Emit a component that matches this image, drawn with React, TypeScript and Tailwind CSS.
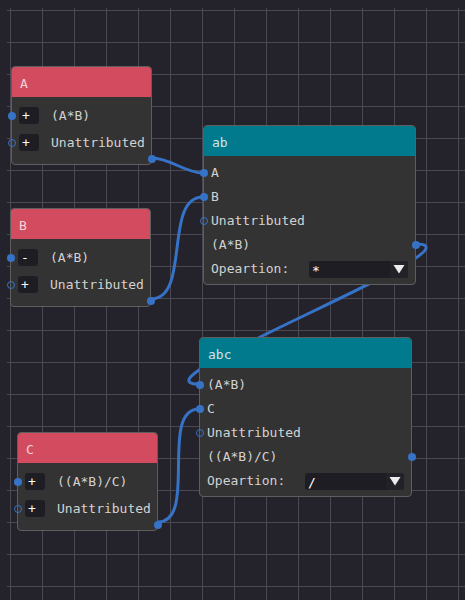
import React from 'react'

const PIN = '#3672c6'

type Pin = 'filled' | 'hollow' | 'none'

function PinDot({ kind, side }: { kind: Pin; side: 'left' | 'right' }) {
  if (kind === 'none') return null
  const pos = side === 'left' ? 'left-[-4.5px]' : 'right-[-4.5px]'
  const look =
    kind === 'filled'
      ? 'bg-[#3672c6]'
      : 'border border-[#3672c6] bg-transparent'
  return (
    <span
      className={`absolute ${pos} top-1/2 -translate-y-1/2 w-[8px] h-[8px] rounded-full ${look}`}
    />
  )
}

interface InputRow {
  sign: '+' | '-'
  label: string
  pin: Pin
}

function SmallNode({
  title,
  rows,
  className,
}: {
  title: string
  rows: InputRow[]
  className: string
}) {
  return (
    <div
      className={`absolute w-[141px] h-[99px] rounded-[4px] border border-[#5e5e5e] bg-[#333333] ${className}`}
    >
      <div className="h-[30px] rounded-t-[3px] bg-[#d24b5e] flex items-center pt-[3px] pl-[8px] text-[#f3d3d8]">
        {title}
      </div>
      <div className="pt-[5px] pl-[7px]">
        {rows.map((r) => (
          <div key={r.label} className="relative h-[27px] flex items-center">
            <div className="absolute left-[-7px] top-0 h-full w-0">
              <PinDot kind={r.pin} side="left" />
            </div>
            <span className="w-[20px] h-[17px] rounded-[3px] bg-[#1e1d23] text-white leading-[17px] pl-[3px]">
              {r.sign}
            </span>
            <span className="ml-[12px] text-[#d2d2d2]">{r.label}</span>
          </div>
        ))}
      </div>
      {/* output pin */}
      <span className="absolute right-[-4.5px] top-[88px] w-[8px] h-[8px] rounded-full bg-[#3672c6]" />
    </div>
  )
}

function BigNode({
  title,
  rows,
  result,
  op,
  className,
}: {
  title: string
  rows: { label: string; pin: Pin }[]
  result: string
  op: string
  className: string
}) {
  return (
    <div
      className={`absolute w-[213px] rounded-[4px] border border-[#5e5e5e] bg-[#333333] ${className}`}
    >
      <div className="h-[30px] rounded-t-[3px] bg-[#007a8c] flex items-center pt-[3px] pl-[8px] text-[#cfe3e7]">
        {title}
      </div>
      <div className="pt-[5px] pb-[3px] pl-[7px] text-[#d2d2d2]">
        {rows.map((r) => (
          <div key={r.label} className="relative h-[24px] flex items-center">
            <div className="absolute left-[-7px] top-0 h-full w-0">
              <PinDot kind={r.pin} side="left" />
            </div>
            {r.label}
          </div>
        ))}
        <div className="relative h-[24px] flex items-center">
          {result}
          <div className="absolute right-0 top-0 h-full w-0">
            <PinDot kind="filled" side="right" />
          </div>
        </div>
        <div className="h-[24px] flex items-center">
          <span className="w-[98px]">Opeartion:</span>
          <div className="w-[99px] h-[17px] rounded-[3px] bg-[#1e1d23] flex items-center">
            <span className="flex-1 pl-[3px] pt-[2px] text-white leading-[17px]">{op}</span>
            <span className="w-[18px] h-full rounded-r-[3px] bg-[#222128] flex items-center justify-center">
              <svg width="12" height="10" viewBox="0 0 12 10">
                <path d="M0.5 1 L11.5 1 L6 9.5 Z" fill="#ececec" />
              </svg>
            </span>
          </div>
        </div>
      </div>
    </div>
  )
}

function Grid() {
  const xs = Array.from({ length: 15 }, (_, i) => 10.5 + i * 32)
  const ys = Array.from({ length: 19 }, (_, i) => 10.5 + i * 32)
  return (
    <svg className="absolute inset-0" width="465" height="600">
      {xs.map((x) => (
        <line key={'v' + x} x1={x} y1={8} x2={x} y2={600} stroke="#4a4952" strokeWidth="1" />
      ))}
      {ys.map((y) => (
        <line key={'h' + y} x1={7} y1={y} x2={465} y2={y} stroke="#4a4952" strokeWidth="1" />
      ))}
    </svg>
  )
}

function Links() {
  return (
    <svg className="absolute inset-0" width="465" height="600" fill="none">
      <g stroke={PIN} strokeWidth="3" strokeLinecap="round">
        <path d="M152 158 C170 158 185 173 203 173" />
        <path d="M151 299 C191 299 163 197 203 197" />
        <path d="M416 244 C491 244 124 384 199 384" />
        <path d="M158 522 C198 522 159 409 199 409" />
      </g>
    </svg>
  )
}

export default function App() {
  return (
    <div className="relative w-[465px] h-[600px] overflow-hidden bg-[#24232c] font-['DejaVu_Sans_Mono',monospace] text-[13px]">
      <Grid />
      <Links />
      <SmallNode
        title="A"
        className="left-[11px] top-[66px]"
        rows={[
          { sign: '+', label: '(A*B)', pin: 'filled' },
          { sign: '+', label: 'Unattributed', pin: 'hollow' },
        ]}
      />
      <SmallNode
        title="B"
        className="left-[10px] top-[208px]"
        rows={[
          { sign: '-', label: '(A*B)', pin: 'filled' },
          { sign: '+', label: 'Unattributed', pin: 'hollow' },
        ]}
      />
      <SmallNode
        title="C"
        className="left-[17px] top-[432px]"
        rows={[
          { sign: '+', label: '((A*B)/C)', pin: 'filled' },
          { sign: '+', label: 'Unattributed', pin: 'hollow' },
        ]}
      />
      <BigNode
        title="ab"
        className="left-[203px] top-[125px]"
        rows={[
          { label: 'A', pin: 'filled' },
          { label: 'B', pin: 'filled' },
          { label: 'Unattributed', pin: 'hollow' },
        ]}
        result="(A*B)"
        op="*"
      />
      <BigNode
        title="abc"
        className="left-[199px] top-[337px]"
        rows={[
          { label: '(A*B)', pin: 'filled' },
          { label: 'C', pin: 'filled' },
          { label: 'Unattributed', pin: 'hollow' },
        ]}
        result="((A*B)/C)"
        op="/"
      />
    </div>
  )
}
